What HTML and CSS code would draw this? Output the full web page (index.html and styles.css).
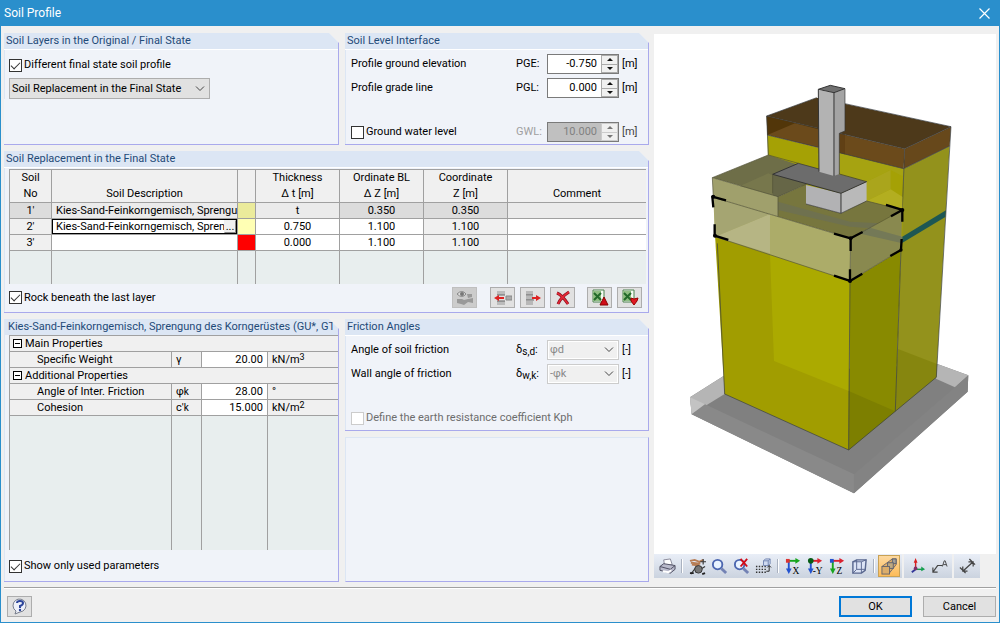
FILE: index.html
```html
<!DOCTYPE html>
<html lang="en">
<head>
<meta charset="utf-8">
<title>Soil Profile</title>
<link rel="stylesheet" href="styles.css">
</head>
<body>
<div class="window">
  <header class="titlebar">
    <h1>Soil Profile</h1>
    <button class="close" aria-label="Close"><svg width="11" height="11" viewBox="0 0 11 11"><path d="M.5 .5l10 10M10.500 .5l-10 10" stroke="#fff" stroke-width="1.200"/></svg></button>
  </header>

  <main class="content">
    <div class="forms">
      <div class="pair">
        <section class="panel">
          <h2>Soil Layers in the Original / Final State</h2>
          <div class="body layers">
            <label class="check"><input type="checkbox" checked>Different final state soil profile</label>
            <select class="state" aria-label="State"><option>Soil Replacement in the Final State</option></select>
          </div>
        </section>
        <section class="panel">
          <h2>Soil Level Interface</h2>
          <div class="body fields">
            <label for="pge">Profile ground elevation</label><span>PGE:</span>
            <div class="spin"><input id="pge" type="text" value="-0.750"><div class="arrows"><button class="up" aria-label="Increase"></button><button class="down" aria-label="Decrease"></button></div></div><span>[m]</span>
            <label for="pgl">Profile grade line</label><span>PGL:</span>
            <div class="spin"><input id="pgl" type="text" value="0.000"><div class="arrows"><button class="up" aria-label="Increase"></button><button class="down" aria-label="Decrease"></button></div></div><span>[m]</span>
            <div class="spacer"></div>
            <label class="check"><input type="checkbox">Ground water level</label><label for="gwl" class="off">GWL:</label>
            <div class="spin disabled"><input id="gwl" type="text" value="10.000" disabled><div class="arrows"><button class="up" aria-label="Increase" disabled></button><button class="down" aria-label="Decrease" disabled></button></div></div><span class="dim">[m]</span>
          </div>
        </section>
      </div>

      <section class="panel">
        <h2>Soil Replacement in the Final State</h2>
        <div class="body gridbody">
          <table class="soil">
            <colgroup><col class="c-no"><col class="c-desc"><col class="c-color"><col class="c-num"><col class="c-num"><col class="c-num"><col></colgroup>
            <thead><tr><th>Soil<br>No</th><th>Soil Description</th><th></th><th>Thickness<br>Δ t [m]</th><th>Ordinate BL<br>Δ Z [m]</th><th>Coordinate<br>Z [m]</th><th>Comment</th></tr></thead>
            <tbody>
              <tr class="locked"><td class="head">1'</td><td class="desc">Kies-Sand-Feinkorngemisch, Sprengu</td><td class="khaki"></td><td>t</td><td class="head">0.350</td><td class="head">0.350</td><td></td></tr>
              <tr><td class="head">2'</td><td class="desc active"><div class="editor"><span>Kies-Sand-Feinkorngemisch, Spreng</span><button aria-label="Browse">...</button></div></td><td class="cream"></td><td>0.750</td><td>1.100</td><td class="head">1.100</td><td></td></tr>
              <tr><td class="head">3'</td><td></td><td class="red"></td><td>0.000</td><td>1.100</td><td class="head">1.100</td><td></td></tr>
              <tr class="filler"><td></td><td></td><td></td><td></td><td></td><td></td><td></td></tr>
            </tbody>
          </table>
          <div class="gridfoot">
            <label class="check"><input type="checkbox" checked>Rock beneath the last layer</label>
            <div class="tools">
              <button disabled aria-label="Show layer"><svg width="18" height="16" viewBox="0 0 18 16"><path d="M1 9h5l2 1 4-1 5-1v5l-5-1-4 3-3-1-4-1z" fill="#999"/><path d="M11 4h5v3l-4 1z" fill="#999"/><path d="M1 4q5-5 9 0-4 5-9 0z" fill="#ddd" stroke="#888"/><circle cx="6" cy="4" r="2" fill="#777"/></svg></button>
              <button class="gap-l" aria-label="Insert layer"><svg width="18" height="16" viewBox="0 0 18 16"><path d="M3 1h8v4H3zM3 11h8v4H3z" fill="#bbb"/><path d="M3 5h8M3 11h8" stroke="#666"/><path d="M12 6h6v4h-6z" fill="#aaa" stroke="#888"/><path d="M0 8l5-3v2h5v2H5v2z" fill="#d22"/></svg></button>
              <button aria-label="Remove layer"><svg width="18" height="16" viewBox="0 0 18 16"><path d="M2 1h7v4H2zM2 6h7v4H2zM2 11h7v4H2z" fill="#b8b8b8"/><path d="M2 5h7M2 10h8" stroke="#666"/><path d="M17 8l-5-3v2H8v2h4v2z" fill="#d22"/></svg></button>
              <button aria-label="Delete"><svg width="16" height="16" viewBox="0 0 16 16"><path d="M2 3Q7 5 13 14M14 2Q6 7 3 14" fill="none" stroke="#8b1520" stroke-width="3"/><path d="M2 3Q7 5 13 14M14 2Q6 7 3 14" fill="none" stroke="#e52736" stroke-width="1.500"/></svg></button>
              <button class="gap-l" aria-label="Export to spreadsheet"><svg width="18" height="17" viewBox="0 0 18 17"><path d="M2 1h11v12H2z" fill="#f4faf2" stroke="#4c8250"/><path d="M2 2h8v10H2z" fill="#8fbd83"/><path d="M3 4l7 7M10 4l-7 7" stroke="#236a2b" stroke-width="2"/><path d="M13 8l4 8H9z" fill="#d00c18" stroke="#800"/></svg></button>
              <button aria-label="Import from spreadsheet"><svg width="18" height="17" viewBox="0 0 18 17"><path d="M2 1h11v12H2z" fill="#f4faf2" stroke="#4c8250"/><path d="M2 2h8v10H2z" fill="#8fbd83"/><path d="M3 4l7 7M10 4l-7 7" stroke="#236a2b" stroke-width="2"/><path d="M10 9l3 1 4-1-1 3-3 4-3-4z" fill="#e01822" stroke="#900"/></svg></button>
            </div>
          </div>
        </div>
      </section>

      <div class="pair lower">
        <section class="panel props">
          <h2>Kies-Sand-Feinkorngemisch, Sprengung des Korngerüstes (GU*, GT</h2>
          <div class="body propbody">
            <table class="proptable">
              <colgroup><col class="c-name"><col class="c-sym"><col class="c-val"><col></colgroup>
              <tbody>
                <tr><th colspan="4"><button class="fold" aria-label="Collapse"></button>Main Properties</th></tr>
                <tr><td class="name">Specific Weight</td><td>γ</td><td class="val">20.00</td><td>kN/m<sup>3</sup></td></tr>
                <tr><th colspan="4"><button class="fold" aria-label="Collapse"></button>Additional Properties</th></tr>
                <tr><td class="name">Angle of Inter. Friction</td><td>φ<small>k</small></td><td class="val">28.00</td><td>°</td></tr>
                <tr><td class="name">Cohesion</td><td>c'<small>k</small></td><td class="val">15.000</td><td>kN/m<sup>2</sup></td></tr>
                <tr class="filler"><td></td><td></td><td></td><td></td></tr>
              </tbody>
            </table>
            <label class="check"><input type="checkbox" checked>Show only used parameters</label>
          </div>
        </section>
        <div class="stack">
          <section class="panel">
            <h2>Friction Angles</h2>
            <div class="body fields">
              <label for="dsd">Angle of soil friction</label><span>δ<sub>s,d</sub>:</span><select id="dsd" class="mini" disabled><option>φd</option></select><span>[-]</span>
              <label for="dwk">Wall angle of friction</label><span>δ<sub>w,k</sub>:</span><select id="dwk" class="mini" disabled><option>-φk</option></select><span>[-]</span>
              <div class="spacer"></div>
              <label class="check wide off"><input type="checkbox" disabled>Define the earth resistance coefficient Kph</label>
            </div>
          </section>
          <section class="blank"></section>
        </div>
      </div>
    </div>

    <div class="viewer">
      <svg class="scene" viewBox="654 34 342 520" role="img" aria-label="Foundation in layered soil">
        <g transform="translate(650 290) scale(.3333)">
          <path d="M120 322L222 257 862 222 955 256 953 305 612 610 125 373z" fill="#808080"/>
          <path d="M120 322L222 257 224 312 125 373z" fill="#b5b5b5"/>
          <path d="M120 322L165 343 125 373z" fill="#c3c3c3"/>
          <path d="M862 222L955 256 915 292 858 266z" fill="#b5b5b5"/>
          <path d="M165 343L612 553V610L125 373z" fill="#898989"/>
          <path d="M612 553L915 292 955 256 953 305 612 610z" fill="#838383"/>
        </g>
        <g transform="translate(650 70) scale(.3333)" stroke-linejoin="round">
          <path d="M761 296L899 228 859 922 736 1024z" fill="#93921c"/>
          <path d="M744 837L861 882 859 922 736 1024z" fill="#86860f"/>
          <path d="M352 195L761 296 757 500 355 300z" fill="#a5a105"/>
          <path d="M500 250L580 250 761 296V320L722 300 650 335 568 318V305L507 290z" fill="#a6a311"/>
          <path d="M195 495L600 633 596 1140 224 972z" fill="#a19d00"/>
          <path d="M360 550L600 633 596 963 372 873z" fill="#abaa00"/>
          <path d="M600 633L753 540 736 1024 596 1140z" fill="#888a00"/>
          <path d="M596 963L736 1024 596 1140z" fill="#7d7f00"/>
          <path d="M757 500L888 421 886 441 755 520z" fill="#1d5753"/>
          <path d="M350 138L500 83 903 170 764 236z" fill="#4d391a"/>
          <path d="M350 138L764 236 761 296 352 195z" fill="#6b4a1b"/>
          <path d="M350 138L505 175V178L435 160 352 195z" fill="#523609"/>
          <path d="M764 236L903 170 899 228 761 296z" fill="#67481b"/>
          <path d="M568 190L585 193V253L568 248z" fill="#604015"/>
          <g fill="none" stroke="#373d43" stroke-width="2">
            <path d="M500 83L350 138 764 236 903 170 585 101M350 138L355 255M352 195L505 232M568 248L761 296 899 228M764 236L757 420M903 170L859 922 736 1024 753 540"/>
            <path d="M202 520L224 972 596 1140 736 1024M600 633L596 1140"/>
          </g>
          <path d="M650 335L722 300V358L650 393z" fill="#aaa51c"/>
          <path d="M650 393L722 358 757 380V420z" fill="#b3ae20"/>
          <path d="M187 323L355 255 530 312 384 380z" fill="#6e6e48"/>
          <path d="M187 323L384 380V440L190 382z" fill="#a0a06c"/>
          <path d="M270 348L355 310 384 324V380z" fill="#77774c"/>
          <path d="M384 380L470 342V402L573 430 650 393 757 420 602 505 384 440z" fill="#77763e"/>
          <path d="M384 395L600 455 690 460 660 475 600 470 384 420z" fill="#6c7055" opacity=".75"/>
          <path d="M190 382L602 505 600 633 195 500z" fill="#acac69"/>
          <path d="M195 500L360 432V550z" fill="#b6b584"/>
          <path d="M192 382L360 432 195 500z" fill="#a5a572"/>
          <path d="M602 505L757 420 753 540 600 633z" fill="#89894f"/>
          <path d="M660 473L757 500V520L625 490z" fill="#747957"/>
          <path d="M368 313L470 342 384 380 368 375z" fill="#666647"/>
          <path d="M368 313L445 280 650 335 573 370z" fill="#6c6c6c"/>
          <path d="M468 345L573 370V430L468 402z" fill="#b2b2b4"/>
          <path d="M573 370L650 335V393L573 430z" fill="#b9b9b9"/>
          <path d="M505 60L552 68V318L507 305z" fill="#b3b3b3"/>
          <path d="M552 68L585 57V183L568 190V312L552 318z" fill="#a4a4a4"/>
          <path d="M505 58L541 46 585 56 552 68z" fill="#707070"/>
          <g fill="none" stroke="#343434" stroke-width="3">
            <path d="M505 58L541 46 585 56 552 68 505 58 507 305M552 68V318"/>
            <path d="M585 56V183L568 190V312" stroke-width="2"/>
            <path d="M368 313L445 280M650 335L573 370 368 313M573 370V430"/>
            <path d="M445 280L507 297M568 312L650 335M468 402L573 430 650 393" stroke-width="2"/>
          </g>
          <g fill="none" stroke="#525238" stroke-width="2">
            <path d="M190 382L187 323 355 255 445 280M187 323L384 380V440M384 380L468 343M190 382L602 505 757 420 650 393M602 505L600 633M195 500L600 633 753 540M368 313V370"/>
          </g>
          <path d="M228 391L187 380 190 412M194 463V497L235 510M552 491L602 505 638 486M602 505V543M708 405L757 420 723 439M757 420V455M755 507L753 540 721 558M552 617L600 633 637 611M600 633V598" fill="none" stroke="#000" stroke-width="7"/>
          <circle cx="602" cy="505" r="6"/><circle cx="600" cy="633" r="6"/><circle cx="757" cy="420" r="6"/><circle cx="753" cy="540" r="5"/><circle cx="190" cy="380" r="6"/><circle cx="195" cy="497" r="6"/>
        </g>
      </svg>
      <div class="viewtools">
        <div class="group">
          <button aria-label="Print"><svg viewBox="0 0 18 18"><path d="M5 2l7-1 2 6-8 2z" fill="#fff" stroke="#889"/><path d="M1 9l4-3 12 2v4l-5 4-11-3z" fill="#b9bacb" stroke="#4c4d60"/><path d="M1 9l11 3 5-4" fill="none" stroke="#4c4d60"/><path d="M4 14l6 1 3-2" fill="none" stroke="#fff" stroke-width="2"/></svg></button>
          <i class="sep"></i>
          <button aria-label="Pan"><svg viewBox="0 0 18 18"><path d="M1 3l5-1 5 2 4-2M2 5l10 1M3 7l8 1" stroke="#b77d55" stroke-width="2" fill="none"/><path d="M15 1v6M12 4h6M2 17l6-8M7 15l10-6" stroke="#333" stroke-width="1.200"/><circle cx="10" cy="12" r="4" fill="#777" stroke="#333"/><path d="M1 16h4M14 17l3-1" stroke="#222" stroke-width="2"/></svg></button>
          <button aria-label="Zoom"><svg viewBox="0 0 18 18"><circle cx="7" cy="7" r="5" fill="#e9f3ff" stroke="#4c66b0" stroke-width="2"/><path d="M11 11l5 5" stroke="#7382b4" stroke-width="3"/></svg></button>
          <button aria-label="Cancel zoom"><svg viewBox="0 0 18 18"><circle cx="7" cy="7" r="5" fill="#e9f3ff" stroke="#4c66b0" stroke-width="2"/><path d="M11 11l5 5" stroke="#7382b4" stroke-width="3"/><path d="M8 1l7 8M15 1L8 9" stroke="#d00b18" stroke-width="2"/></svg></button>
          <button aria-label="View by grid"><svg viewBox="0 0 18 18"><path d="M1 9h11M1 12h11M1 15h11" stroke="#333" stroke-width="1.500" stroke-dasharray="1.500 1.500"/><path d="M9 3l2-2h5v5l-2 2H9zM9 3h5v5M14 3l2-2" fill="#cfdaf0" stroke="#7084b0"/><path d="M15 8v6h-3m3-6l-2 2m2-2l2 2" fill="none" stroke="#222"/></svg></button>
          <i class="sep"></i>
          <button aria-label="View in X"><svg viewBox="0 0 18 18"><path d="M3 3h9" stroke="#18a51f" stroke-width="2"/><path d="M11 0l5 3-5 3z" fill="#18a51f"/><path d="M4 4v8" stroke="#2352cf" stroke-width="2"/><path d="M1 11h6l-3 6z" fill="#2352cf"/><rect x="1" y="1" width="4" height="4" fill="#d33"/><text x="8" y="17">X</text></svg></button>
          <button aria-label="View against Y"><svg viewBox="0 0 18 18"><path d="M3 3h9" stroke="#db2130" stroke-width="2"/><path d="M11 0l5 3-5 3z" fill="#db2130"/><path d="M4 4v8" stroke="#2352cf" stroke-width="2"/><path d="M1 11h6l-3 6z" fill="#2352cf"/><circle cx="4" cy="3" r="3" fill="#075c15"/><text x="6" y="17">-Y</text></svg></button>
          <button aria-label="View in Z"><svg viewBox="0 0 18 18"><path d="M3 3h9" stroke="#db2130" stroke-width="2"/><path d="M11 0l5 3-5 3z" fill="#db2130"/><path d="M4 4v8" stroke="#18a51f" stroke-width="2"/><path d="M1 11h6l-3 6z" fill="#18a51f"/><rect x="1" y="1" width="4" height="4" fill="#2352cf"/><text x="8" y="17">Z</text></svg></button>
          <button aria-label="Isometric view"><svg viewBox="0 0 18 18"><path d="M2 4l4-2h10l-1 11-4 3H2z" fill="#dbe3f5" stroke="#58668e" stroke-width="1.500"/><path d="M2 4h9v12M11 4l5-2M6 2v10l-4 4M6 12h9" fill="none" stroke="#58668e"/></svg></button>
          <i class="sep"></i>
          <button class="on" aria-label="Perspective"><svg viewBox="0 0 18 18"><path d="M1 9L12 1h4v6L8 17" fill="#e4b168" stroke="#6c6670"/><rect x="12" y="1" width="4" height="5" fill="#a5a096" stroke="#5c6170"/><rect x="7" y="5" width="6" height="6" fill="#bfa981" stroke="#5c6170"/><rect x="1" y="9" width="8" height="8" fill="#dbad6b" stroke="#66656c"/></svg></button>
        </div>
        <div class="group">
          <button aria-label="Axes"><svg viewBox="0 0 18 18"><path d="M7 12V3" stroke="#d82020" stroke-width="1.500"/><path d="M5 5l2-5 2 5z" fill="#d82020"/><path d="M7 12h8" stroke="#149e4d" stroke-width="1.500"/><path d="M13 9l4 3-4 2z" fill="#149e4d"/><path d="M7 12l-4 3" stroke="#333799" stroke-width="2"/><circle cx="7" cy="11" r="2" fill="#7f3068"/></svg></button>
          <button aria-label="Labels"><svg viewBox="0 0 18 18"><path d="M2 15l5-7h5M2 10v5h5" fill="none" stroke="#444" stroke-width="1.200"/><path d="M12 9l2-6h1l2 6M13 7h3" fill="none" stroke="#444"/></svg></button>
        </div>
        <div class="group">
          <button aria-label="Dimensions"><svg viewBox="0 0 18 18"><path d="M4 14L15 4M4 9v5h5M10 4h5v5M1 10l6 6M11 1l6 6" fill="none" stroke="#444" stroke-width="1.300"/></svg></button>
        </div>
      </div>
    </div>
  </main>

  <footer class="footer">
    <button class="help" aria-label="Help"><svg width="17" height="17" viewBox="0 0 17 17"><path d="M5 13l-1 3 5-2a6.500 6.500 0 1 0-4-1z" fill="#eef1fa" stroke="#777d8c"/><path d="M6 5q0-2 3-2t3 2q0 2-3 3v2" fill="none" stroke="#2b449a" stroke-width="2"/><circle cx="9" cy="12" r="1.200" fill="#2b449a"/></svg></button>
    <button class="dialog primary">OK</button>
    <button class="dialog">Cancel</button>
  </footer>
</div>
</body>
</html>
```
FILE: styles.css
```css
* { box-sizing: border-box; }
body { margin: 0; font: 11px/16px Roboto, "Noto Sans", sans-serif; color: #000; background: #f0f0f0; }
h1, h2 { margin: 0; font-weight: 400; }
button, input, select { font: inherit; color: inherit; margin: 0; padding: 0; border-radius: 0; }
svg { display: block; flex: none; }

.window { min-height: 100vh; display: flex; flex-direction: column; border: 1px solid #2a8fcc; border-top: 0; }
.titlebar { height: 26px; flex: none; display: flex; align-items: center; justify-content: space-between; padding: 0 9px 0 3px; background: #2a8fcc; color: #fff; }
.titlebar h1 { font-size: 12px; line-height: 16px; }
.close { border: 0; background: none; }

.content { flex: 1; display: grid; grid-template-columns: 645fr 342fr; gap: 5px; padding: 7px 3px 5px; }
.forms { min-width: 0; display: flex; flex-direction: column; gap: 6px; }
.pair { display: grid; grid-template-columns: 335fr 304fr; gap: 6px; }
.lower { flex: 1; }
.stack { display: flex; flex-direction: column; gap: 6px; min-width: 0; }

.panel { min-width: 0; background: #f0f3f9; border: solid #a9a9ec; border-width: 0 1px 1px 0; clip-path: polygon(0 0, calc(100% - 10px) 0, 100% 10px, 100% 100%, 0 100%); }
.panel h2 { height: 17px; padding: 0 2px; background: #dce6f4; border-bottom: 1px solid #fff; color: #1f4a78; font-size: 11px; line-height: 16px; white-space: nowrap; overflow: hidden; }
.body { border-left: 1px solid #dce6f4; }
.blank { flex: 1; background: #f0f3f9; border: 1px solid #dce6f4; border-right-color: #a9a9ec; border-bottom-color: #a9a9ec; }

.check { display: flex; align-items: center; gap: 2px; white-space: nowrap; }
.check input { appearance: none; flex: none; width: 13px; height: 13px; border: 1px solid #333; background: #fff; display: grid; place-items: center; }
.check input:checked::before { content: ""; width: 8px; height: 4px; border: solid #333; border-width: 0 0 1px 1px; transform: translateY(-1px) rotate(-45deg); }
.check input:disabled { border-color: #ccc; }
.off { color: #6d6d6d; }
.dim { color: #444; }
label.off[for] { color: #a0a0a0; }

.layers { padding: 7px 4px 0; display: flex; flex-direction: column; align-items: flex-start; gap: 5px; }
.state, .mini { appearance: none; background: #e1e1e1 url("data:image/svg+xml,%3Csvg xmlns='http://www.w3.org/2000/svg' width='10' height='6'%3E%3Cpath d='M1 .5l4 4 4-4' fill='none' stroke='%23444'/%3E%3C/svg%3E") no-repeat right 4px center; border: 1px solid #adadad; height: 21px; padding: 0 20px 0 2px; }
.state { width: 201px; }
.mini { height: 20px; width: 72px; background-color: #f0f0f0; border-color: #ccc; box-shadow: inset 0 0 0 1px #fff; color: #888; opacity: 1; }

.fields { display: grid; grid-template-columns: 1fr 31px 72px 29px; row-gap: 4px; align-items: center; padding: 4px 0 2px 5px; white-space: nowrap; }
.fields > .dim, .fields > .spin + span, .fields > .mini + span { padding-left: 3px; }
.fields .wide { grid-column: 1 / -1; height: 20px; }
.spacer { grid-column: 1 / -1; height: 16px; }
.fields sub { font-size: 10px; line-height: 1px; vertical-align: -2px; }

.spin { display: flex; height: 20px; border: 1px solid #7a7a7a; background: #fff; }
.spin input { flex: 1; min-width: 0; border: 0; background: none; text-align: right; padding-right: 4px; }
.arrows { width: 17px; display: flex; flex-direction: column; border: 1px solid #aaa; gap: 1px; background: #aaa; }
.arrows button { flex: 1; border: 0; background: #f0f0f0; display: grid; place-items: center; }
.arrows button::before { content: ""; border: 3px solid transparent; }
.arrows .up::before { border-top: 0; border-bottom-color: #111; }
.arrows .down::before { border-bottom: 0; border-top-color: #111; }
.disabled input { background: #c0c0c0; color: #808080; }
.disabled .arrows { background: #ccc; border-color: #ccc; }
.disabled .up::before { border-bottom-color: #777; }
.disabled .down::before { border-top-color: #777; }

table { width: 100%; table-layout: fixed; border-collapse: separate; border-spacing: 0; line-height: 15px; border: solid #a0a0a0; border-width: 1px 0 0 1px; }
th, td { padding: 0; font-weight: 400; height: 16px; border: solid #a0a0a0; border-width: 0 1px 1px 0; overflow: hidden; white-space: nowrap; }
tr > :last-child { border-right: 0; }
.gridbody { padding: 1px 2px 4px 4px; }
.c-no { width: 42px; }
.c-desc { width: 186px; }
.c-color { width: 18px; }
.c-num { width: 84px; }
.soil th { height: 33px; background: #f0f0f0; line-height: 16px; vertical-align: bottom; }
.soil td { background: #fff; text-align: center; }
.soil .locked td { background: #ebebeb; }
.soil td.head { background: #f0f0f0; }
.soil .locked td.head { background: #dcdcdc; }
.soil td.desc { text-align: left; padding-left: 4px; }
.soil td.active { padding: 0; }
.soil tr td.khaki { background: #ebeb9b; }
.soil tr td.cream { background: #ffffb4; }
.soil tr td.red { background: #f00; }
tr.filler td { background: #e8eeee; border-bottom: 0; }
.soil .filler td { height: 33px; background: #e8eeee; }
.editor { display: flex; height: 15px; outline: 1px solid #000; outline-offset: -1px; padding: 1px 1px 1px 4px; line-height: 13px; }
.editor span { flex: 1; min-width: 0; overflow: hidden; }
.editor button { width: 12px; flex: none; border: 1px solid #eee; border-right-color: #888; border-bottom-color: #888; background: #f0f0f0; line-height: 9px; }

.gridfoot { display: flex; justify-content: space-between; align-items: center; padding-top: 3px; }
.tools { display: flex; gap: 5px; padding-right: 4px; }
.tools button, .help { width: 25px; height: 21px; display: grid; place-items: center; border: 1px solid #adadad; background: #e1e1e1; }
.tools button:disabled { background: #ccc; border-color: #bfbfbf; }
.tools .gap-l { margin-left: 7px; }
.tools button:disabled + .gap-l { margin-left: 8px; }

.props h2 { border-bottom: 0; height: 16px; padding: 0 4px; }
.propbody { padding: 0 0 7px 4px; }
.propbody .check { padding-top: 8px; }
.c-name { width: 162px; }
.c-sym { width: 30px; }
.c-val { width: 66px; }
.proptable th, .proptable td { background: #f0f0f0; text-align: left; padding-left: 4px; }
.proptable th { padding-left: 3px; }
.proptable .name { padding-left: 27px; }
.proptable .val { background: #fff; text-align: right; padding-right: 4px; }
.proptable .filler td { height: 134px; background: #e8eeee; }
.proptable small { font-size: 10px; }
.proptable sup { font-size: 9px; line-height: 1px; vertical-align: 3px; }
.fold { width: 9px; height: 9px; border: 1px solid #000; background: #fff linear-gradient(#000, #000) no-repeat center / 5px 1px; margin-right: 3px; }

.viewer { min-width: 0; display: flex; flex-direction: column; }
.scene { flex: 1; width: 100%; min-height: 0; margin-top: 1px; background: #fff; }
.viewtools { display: flex; gap: 2px; margin-bottom: 4px; }
.group { display: flex; align-items: center; height: 24px; padding: 0 2px; background: linear-gradient(#e9eef7, #cbd3df); }
.viewtools button { width: 22px; height: 22px; border: 0; background: none; display: grid; place-items: center; }
.viewtools svg { width: 17px; height: 17px; }
.viewtools text { font: 10px "Liberation Serif", serif; }
.viewtools button.on { border: 1px solid #c9a255; background: linear-gradient(#fdd9a0, #fdbb58); }
.sep { width: 1px; height: 14px; margin: 0 4px 0 3px; background: #aab2c0; box-shadow: 1px 0 #fff; }

.footer { margin: 0 3px; padding: 8px 0 5px 3px; border-top: 1px solid #a0a0a0; box-shadow: inset 0 1px #fff; display: flex; align-items: center; gap: 11px; }
.help { margin-right: auto; }
.dialog { width: 73px; height: 21px; border: 1px solid #adadad; background: #e1e1e1; }
.primary { border: 2px solid #0078d7; }
```
